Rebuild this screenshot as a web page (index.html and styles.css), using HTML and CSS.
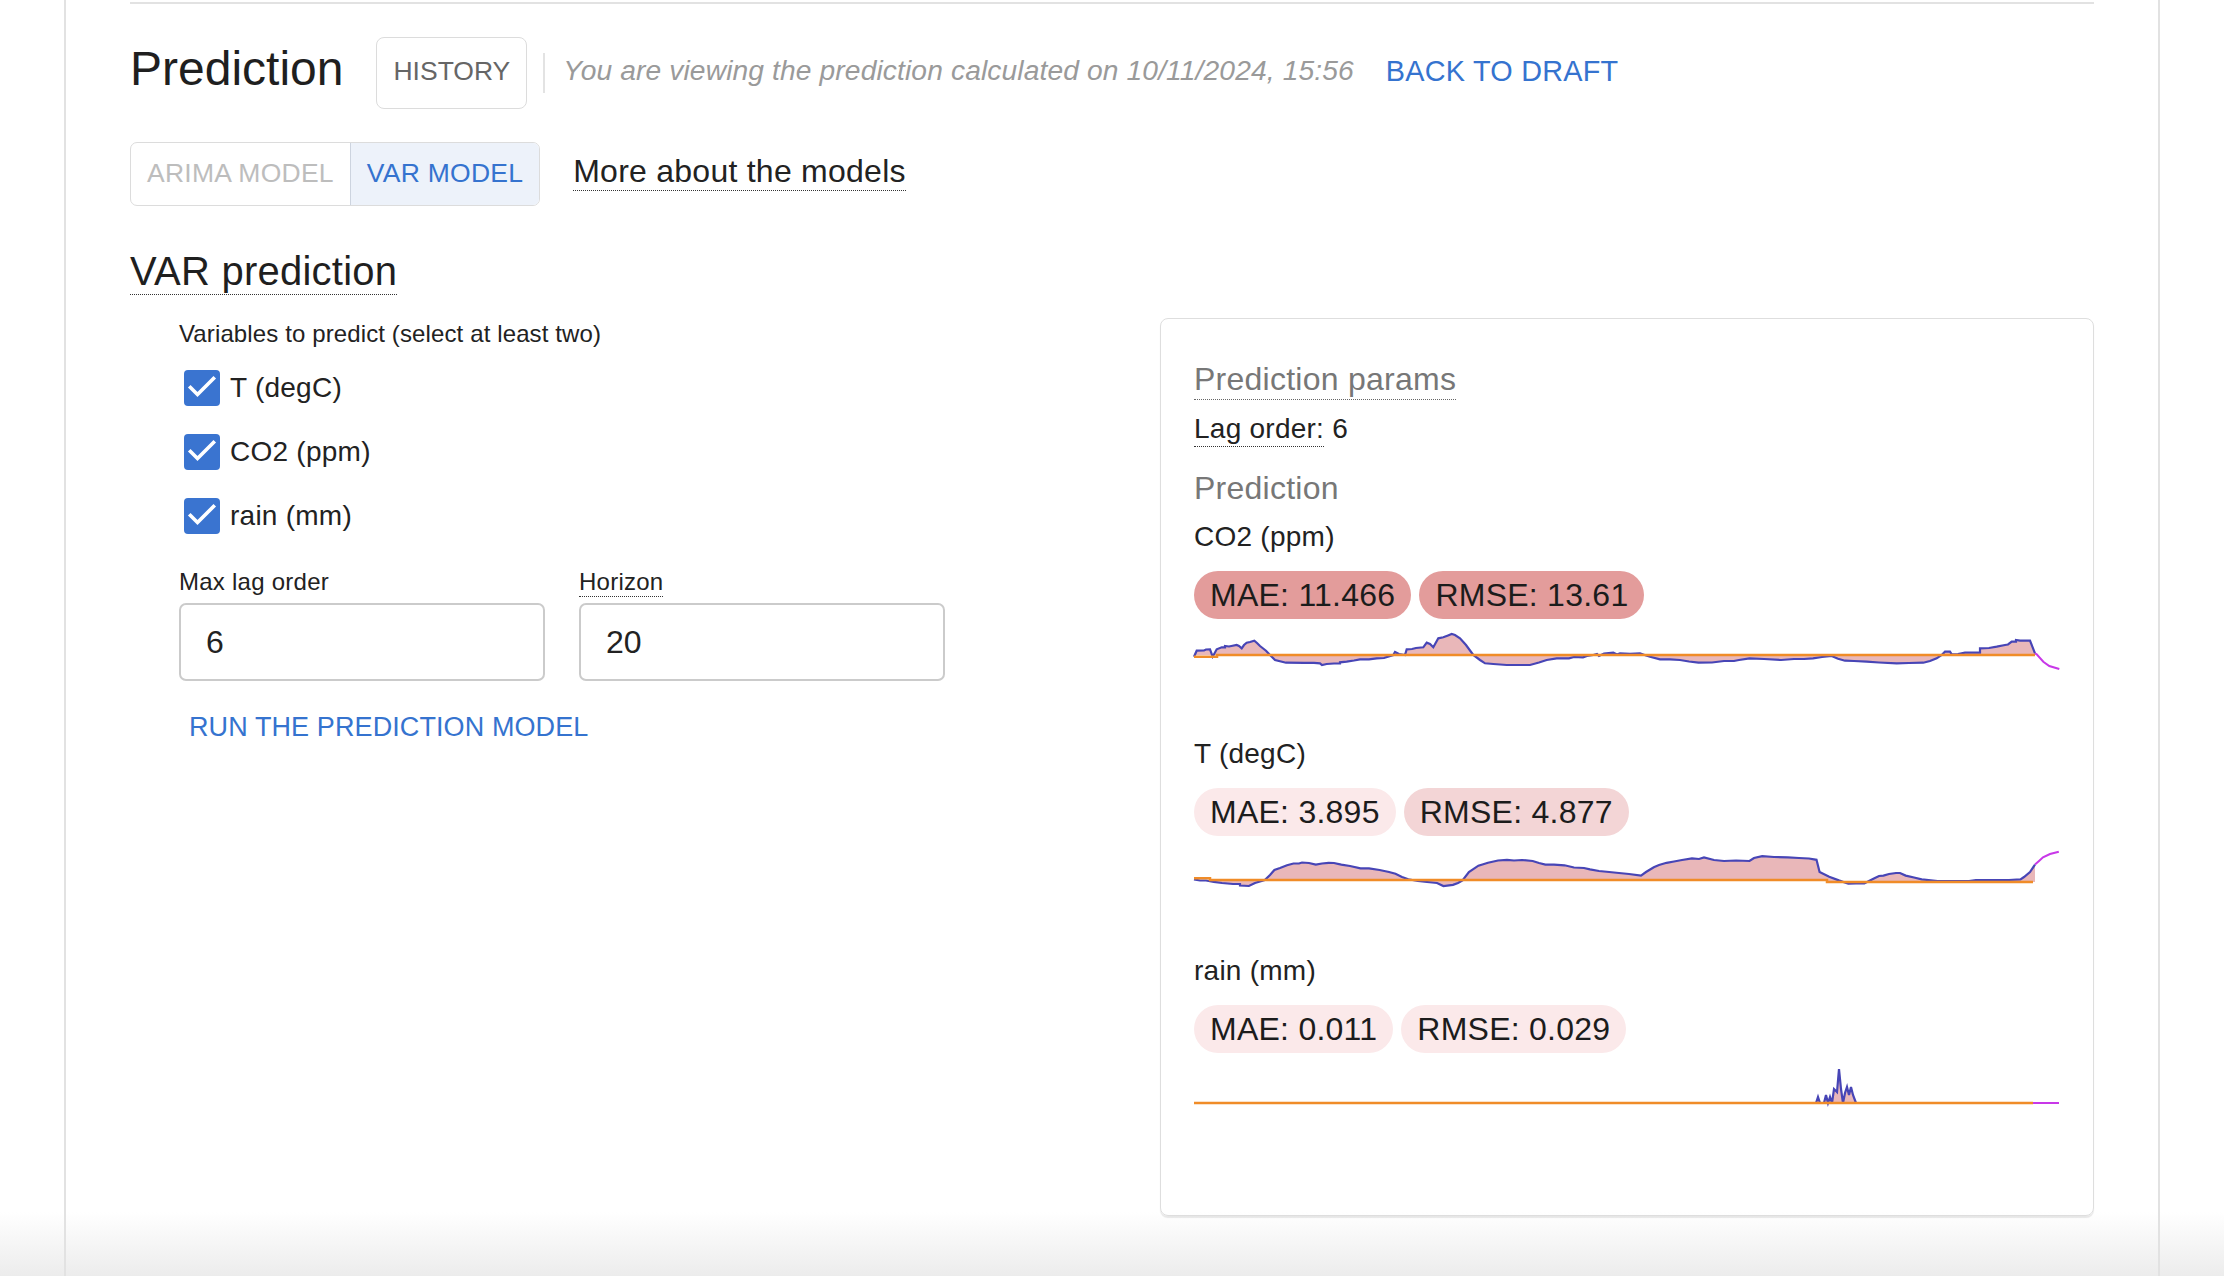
FILE: index.html
```html
<!DOCTYPE html>
<html lang="en">
<head>
<meta charset="utf-8">
<title>Prediction</title>
<link rel="stylesheet" href="styles.css">
</head>
<body>
<div class="page">
  <div class="top-rule"></div>

  <div class="header">
    <h1 class="title">Prediction</h1>
    <div class="history">HISTORY</div>
    <div class="sep"></div>
    <div class="viewing">You are viewing the prediction calculated on 10/11/2024, 15:56</div>
    <div class="back">BACK TO DRAFT</div>
  </div>

  <div class="models-row">
    <div class="toggle">
      <div class="tog">ARIMA MODEL</div>
      <div class="tog active">VAR MODEL</div>
    </div>
    <div class="more"><span class="dotted">More about the models</span></div>
  </div>

  <h2 class="var-title"><span class="dotted">VAR prediction</span></h2>

  <div class="main">
    <div class="form">
      <div class="vars-label">Variables to predict (select at least two)</div>
      <div class="checks">
        <div class="check"><span class="box"><svg width="36" height="36" viewBox="0 0 36 36"><path d="M6.5 17.5 L13.5 24.5 L29.5 8.5" fill="none" stroke="#fff" stroke-width="3.6" stroke-linecap="square"/></svg></span><span>T (degC)</span></div>
        <div class="check"><span class="box"><svg width="36" height="36" viewBox="0 0 36 36"><path d="M6.5 17.5 L13.5 24.5 L29.5 8.5" fill="none" stroke="#fff" stroke-width="3.6" stroke-linecap="square"/></svg></span><span>CO2 (ppm)</span></div>
        <div class="check"><span class="box"><svg width="36" height="36" viewBox="0 0 36 36"><path d="M6.5 17.5 L13.5 24.5 L29.5 8.5" fill="none" stroke="#fff" stroke-width="3.6" stroke-linecap="square"/></svg></span><span>rain (mm)</span></div>
      </div>
      <div class="fields">
        <div class="field">
          <div class="field-label">Max lag order</div>
          <input class="input" type="text" value="6">
        </div>
        <div class="field">
          <div class="field-label"><span class="dotted small">Horizon</span></div>
          <input class="input" type="text" value="20">
        </div>
      </div>
      <div class="run">RUN THE PREDICTION MODEL</div>
    </div>

    <div class="card">
      <div class="params-title"><span class="dotted">Prediction params</span></div>
      <div class="lag"><span class="dotted">Lag order:</span> 6</div>
      <div class="pred-sub">Prediction</div>

      <div class="series">
        <div class="series-label">CO2 (ppm)</div>
        <div class="badges">
          <span class="badge strong">MAE: 11.466</span>
          <span class="badge strong">RMSE: 13.61</span>
        </div>
        <svg class="chart" width="866" height="60" viewBox="0 0 866 60">
          <path class="fill" d="M0,30 L0,31.7 2.7,25.7 10,25.5 12,24.5 16,24.3 18.7,31.7 22.7,24.3 27.7,22.3 31,22.3 31,21 35,21.5 42.7,20 45,21 47.7,23.3 50,20 52.7,17.7 56,17 60.3,15.7 63,18 66,21 72,25.7 76,30 81,35 92,37.7 110,37.9 120,37.9 126,38.3 128,40 132.7,39 140,38.5 146,38.5 146,37.3 152.7,36.7 160,35.5 166,34.3 175,34.3 182.7,33.3 190,33 199.3,30 201,27 205,29 211,30 212.7,24.3 218,24 222,23 229.3,22.3 232.7,17.7 236,19 239.3,22.3 244.3,13.3 249.3,12.3 254,10.5 257.7,9 261,10 266,13.3 272,20 279.3,30 286,35 291,38.3 299.3,39 312.7,40 336,40 345,37.5 352.7,35 362.7,33.3 375,33.3 380,32 389,32.3 393,31 399.3,30 403,29 405,31 410,28.5 419.3,27.7 423,29.5 426,28.3 436,28.8 446,28.3 452,30.5 456,31.7 466,34.3 476,34.3 486,35 495,36.5 504.5,37.7 518,37.5 530,36 540,36 545,35 555.5,33.3 570,34 587,35 600,34 610,34 619,33.3 628,32 637.7,31 644,33.7 651,35.7 660,36 672.7,36.7 685,37.5 702.7,38.3 715,38 729.3,37.7 736,36 742.7,33.3 747.7,30 751,26.7 756,26.7 757.7,29.3 764,29 771,27.7 778,27.7 786,27.7 786,23.3 795,23 802.7,21.7 811,20 814,19.5 817.7,16.7 822,16.7 822,15 826,15.7 836,15.7 841,28.3 L841,30 Z"/>
          <polyline class="line" points="0,31.7 2.7,25.7 10,25.5 12,24.5 16,24.3 18.7,31.7 22.7,24.3 27.7,22.3 31,22.3 31,21 35,21.5 42.7,20 45,21 47.7,23.3 50,20 52.7,17.7 56,17 60.3,15.7 63,18 66,21 72,25.7 76,30 81,35 92,37.7 110,37.9 120,37.9 126,38.3 128,40 132.7,39 140,38.5 146,38.5 146,37.3 152.7,36.7 160,35.5 166,34.3 175,34.3 182.7,33.3 190,33 199.3,30 201,27 205,29 211,30 212.7,24.3 218,24 222,23 229.3,22.3 232.7,17.7 236,19 239.3,22.3 244.3,13.3 249.3,12.3 254,10.5 257.7,9 261,10 266,13.3 272,20 279.3,30 286,35 291,38.3 299.3,39 312.7,40 336,40 345,37.5 352.7,35 362.7,33.3 375,33.3 380,32 389,32.3 393,31 399.3,30 403,29 405,31 410,28.5 419.3,27.7 423,29.5 426,28.3 436,28.8 446,28.3 452,30.5 456,31.7 466,34.3 476,34.3 486,35 495,36.5 504.5,37.7 518,37.5 530,36 540,36 545,35 555.5,33.3 570,34 587,35 600,34 610,34 619,33.3 628,32 637.7,31 644,33.7 651,35.7 660,36 672.7,36.7 685,37.5 702.7,38.3 715,38 729.3,37.7 736,36 742.7,33.3 747.7,30 751,26.7 756,26.7 757.7,29.3 764,29 771,27.7 778,27.7 786,27.7 786,23.3 795,23 802.7,21.7 811,20 814,19.5 817.7,16.7 822,16.7 822,15 826,15.7 836,15.7 841,28.3"/>
          <path class="base" d="M0,31.7 H23 V30 H841"/>
          <polyline class="future" points="841,28.3 842.7,29.3 849.3,36.7 855.3,41 865.3,44"/>
        </svg>
      </div>

      <div class="series">
        <div class="series-label">T (degC)</div>
        <div class="badges">
          <span class="badge pale">MAE: 3.895</span>
          <span class="badge mid">RMSE: 4.877</span>
        </div>
        <svg class="chart" width="866" height="60" viewBox="0 0 866 60">
          <path class="fill" d="M0,38 L0,37.3 6,38.5 12,38.5 19.8,39.9 28,41 39,42 46,42 46,43.5 54.9,44 61,41 70.8,38 76,33 80.4,28 86,26 93,23.3 99.5,21.5 105,21.5 108,20.5 115,21 121.8,22.6 128,21.5 134.6,20.8 140,21 147.3,22.6 156,24 166.5,26.3 175,26.3 185.6,28 195,30 201.5,31.8 208,35 214.3,37.3 223.9,39 233,40 243,41 249.4,44 259,42.8 264,41 268.5,38.4 274.9,30 284.4,23.7 290,22 294,20.8 304,18.5 313,17.8 320,18.5 328,18 338.7,19 345,21 351.4,22.6 360,22.6 370.5,23.3 380,25.5 390,26 396,27.4 405,29 415.2,30 425,31 435,32 447,33.6 452,30 459.8,25.2 465,23 472.6,20.8 480,19.5 488,18 498,16.4 505,17 510,15.5 520,18 530,19 542,18.5 555.5,19 560,16 568.2,14.1 580,15 593.8,15.3 605,16 615,16.5 622.5,17.8 625.6,30 635.2,34.7 644.8,38.4 654.3,41.7 662,41.5 670.3,41.4 675,39 679.9,36.6 685,34 689.4,33.6 695,32 702,31 706,31 711.7,33.6 720,35.5 727.7,37.3 743.6,39 760,39 775,39 781.9,38 800,38 815,38 826.5,37.3 830,35 836,30 841,22.6 L841,40 L633,40 L633,38 Z"/>
          <polyline class="line" points="0,37.3 6,38.5 12,38.5 19.8,39.9 28,41 39,42 46,42 46,43.5 54.9,44 61,41 70.8,38 76,33 80.4,28 86,26 93,23.3 99.5,21.5 105,21.5 108,20.5 115,21 121.8,22.6 128,21.5 134.6,20.8 140,21 147.3,22.6 156,24 166.5,26.3 175,26.3 185.6,28 195,30 201.5,31.8 208,35 214.3,37.3 223.9,39 233,40 243,41 249.4,44 259,42.8 264,41 268.5,38.4 274.9,30 284.4,23.7 290,22 294,20.8 304,18.5 313,17.8 320,18.5 328,18 338.7,19 345,21 351.4,22.6 360,22.6 370.5,23.3 380,25.5 390,26 396,27.4 405,29 415.2,30 425,31 435,32 447,33.6 452,30 459.8,25.2 465,23 472.6,20.8 480,19.5 488,18 498,16.4 505,17 510,15.5 520,18 530,19 542,18.5 555.5,19 560,16 568.2,14.1 580,15 593.8,15.3 605,16 615,16.5 622.5,17.8 625.6,30 635.2,34.7 644.8,38.4 654.3,41.7 662,41.5 670.3,41.4 675,39 679.9,36.6 685,34 689.4,33.6 695,32 702,31 706,31 711.7,33.6 720,35.5 727.7,37.3 743.6,39 760,39 775,39 781.9,38 800,38 815,38 826.5,37.3 830,35 836,30 841,22.6"/>
          <path class="base" d="M0,36.3 H16 V38 H633 V40 H839"/>
          <polyline class="future" points="841,22.6 845,19 849,15.3 856,12 864.8,9.7"/>
        </svg>
      </div>

      <div class="series">
        <div class="series-label">rain (mm)</div>
        <div class="badges">
          <span class="badge pale">MAE: 0.011</span>
          <span class="badge pale">RMSE: 0.029</span>
        </div>
        <svg class="chart" width="866" height="60" viewBox="0 0 866 60">
          <path class="fill" d="M622,44 L624,38 626,44 630,44 632,36 634,44 636,38 638,44 640,30 643,33 645,10 647,30 649,44 651,34 653,28 655,36 657,28 659,36 662,44 Z"/>
          <polyline class="line" points="622,44 624,38 626,44 630,44 632,36 634,44 636,38 638,44 640,30 643,33 645,10 647,30 649,44 651,34 653,28 655,36 657,28 659,36 662,44"/>
          <path class="base" d="M0,44 H839"/>
          <path class="future" d="M839,44 H865"/>
        </svg>
      </div>
    </div>
  </div>
</div>
</body>
</html>
```
FILE: styles.css
```css
* { box-sizing: border-box; }

html, body {
  margin: 0;
  padding: 0;
}

body {
  font-family: "Liberation Sans", Arial, Helvetica, sans-serif;
  color: #222;
  letter-spacing: 0.25px;
  min-height: 1276px;
  background: linear-gradient(to bottom, #ffffff 0, #ffffff 1212px, #ececec 1276px);
}

.page {
  margin-left: 64px;
  width: 2096px;
  min-height: 1276px;
  border-left: 2px solid #e2e2e2;
  border-right: 2px solid #e2e2e2;
  padding: 2px 64px 0;
}

.top-rule {
  height: 2px;
  background: #e2e2e2;
}

/* header */
.header {
  display: flex;
  align-items: center;
  height: 72px;
  margin-top: 33px;
}

.title {
  margin: 0 33px 8px 0;
  font-size: 48px;
  line-height: 1;
  font-weight: normal;
  letter-spacing: 0;
  color: #1f1f1f;
}

.history {
  height: 72px;
  display: flex;
  align-items: center;
  padding: 0 16px 3px;
  border: 1px solid #dcdcdc;
  border-radius: 8px;
  font-size: 26.5px;
  line-height: 1;
  letter-spacing: 0;
  color: #666;
}

.sep {
  width: 2px;
  height: 40px;
  background: #e3e3e3;
  margin: 0 18px 0 16px;
}

.viewing {
  font-style: italic;
  font-size: 28.2px;
  line-height: 1;
  letter-spacing: 0.12px;
  color: #9a9a9a;
  margin-bottom: 5px;
  white-space: nowrap;
}

.back {
  margin-left: 32px;
  margin-bottom: 3px;
  font-size: 28.8px;
  line-height: 1;
  color: #3573cf;
  white-space: nowrap;
}

/* model toggle row */
.models-row {
  display: flex;
  align-items: center;
  height: 64px;
  margin-top: 33px;
}

.toggle {
  display: flex;
  height: 64px;
  border: 1px solid #dcdcdc;
  border-radius: 7px;
  overflow: hidden;
}

.tog {
  display: flex;
  align-items: center;
  padding: 0 16px 2px;
  font-size: 26.5px;
  line-height: 1;
  color: #bdbdbd;
  white-space: nowrap;
}

.tog.active {
  background: #edf2fa;
  color: #3573cf;
  border-left: 1px solid #cdd4df;
}

.more {
  display: flex;
  margin-left: 33px;
  margin-bottom: 3px;
  font-size: 32px;
}

.dotted {
  display: inline-block;
  line-height: 1;
  padding-bottom: 3px;
  border-bottom: 1px dotted #333;
}

/* VAR title */
.var-title {
  display: flex;
  margin: 45px 0 0;
  font-size: 40px;
  font-weight: normal;
  color: #1f1f1f;
}

/* main grid */
.main {
  display: grid;
  grid-template-columns: 1fr 1fr;
  column-gap: 96px;
  align-items: start;
  margin-top: 23px;
}

.form {
  padding-left: 49px;
}

.vars-label {
  font-size: 24px;
  line-height: 32px;
  letter-spacing: 0.12px;
}

.checks {
  margin-top: 6px;
}

.check {
  display: flex;
  align-items: center;
  gap: 10px;
  height: 64px;
  padding-left: 5px;
  font-size: 28px;
  line-height: 1;
}

.box {
  width: 36px;
  height: 36px;
  border-radius: 4px;
  background: #3a74d0;
  display: flex;
}

.fields {
  display: flex;
  gap: 34px;
  margin-top: 18px;
}

.field {
  width: 366px;
}

.field-label {
  font-size: 24px;
  line-height: 32px;
  height: 32px;
  margin-bottom: 5px;
}

.dotted.small {
  padding-bottom: 2px;
}

.input {
  display: block;
  width: 366px;
  height: 78px;
  border: 2px solid #cbcbcb;
  border-radius: 7px;
  padding: 0 25px;
  font-family: "Liberation Sans", Arial, Helvetica, sans-serif;
  font-size: 32px;
  color: #222;
  background: #fff;
  outline: none;
}

.run {
  display: inline-block;
  margin-top: 20px;
  padding: 8px 10px;
  font-size: 27px;
  line-height: 36px;
  letter-spacing: 0.1px;
  color: #3573cf;
  white-space: nowrap;
}

/* card */
.card {
  border: 1px solid #dedede;
  border-radius: 8px;
  box-shadow: 0 2px 1px rgba(0, 0, 0, 0.09);
  padding: 44px 33px 96px;
}

.params-title {
  display: flex;
  font-size: 32px;
  color: #777;
}

.params-title .dotted {
  padding-bottom: 4px;
  border-bottom-color: #666;
}

.lag {
  margin-top: 9px;
  font-size: 28px;
  line-height: 40px;
}

.lag .dotted {
  padding-bottom: 3px;
}

.pred-sub {
  margin-top: 19px;
  font-size: 32px;
  line-height: 40px;
  color: #777;
}

.series {
  margin-top: 49px;
}

.pred-sub + .series {
  margin-top: 9px;
}

.series-label {
  font-size: 28px;
  line-height: 40px;
}

.badges {
  display: flex;
  gap: 8px;
  margin-top: 14px;
}

.badge {
  height: 48px;
  border-radius: 24px;
  padding: 0 16px;
  font-size: 32px;
  line-height: 48px;
  color: #1c1c1c;
  white-space: nowrap;
}

.badge.strong { background: #e39c9b; }
.badge.mid { background: #f3d5d6; }
.badge.pale { background: #fbe9ea; }

.chart {
  display: block;
  margin-top: 6px;
  overflow: visible;
}

.chart .fill {
  fill: #e9b7b9;
  stroke: none;
}

.chart .line {
  fill: none;
  stroke: #4745b6;
  stroke-width: 2.2;
  stroke-linejoin: miter;
}

.chart .base {
  fill: none;
  stroke: #f08c28;
  stroke-width: 2.5;
}

.chart .future {
  fill: none;
  stroke: #c838e8;
  stroke-width: 2;
}
```
